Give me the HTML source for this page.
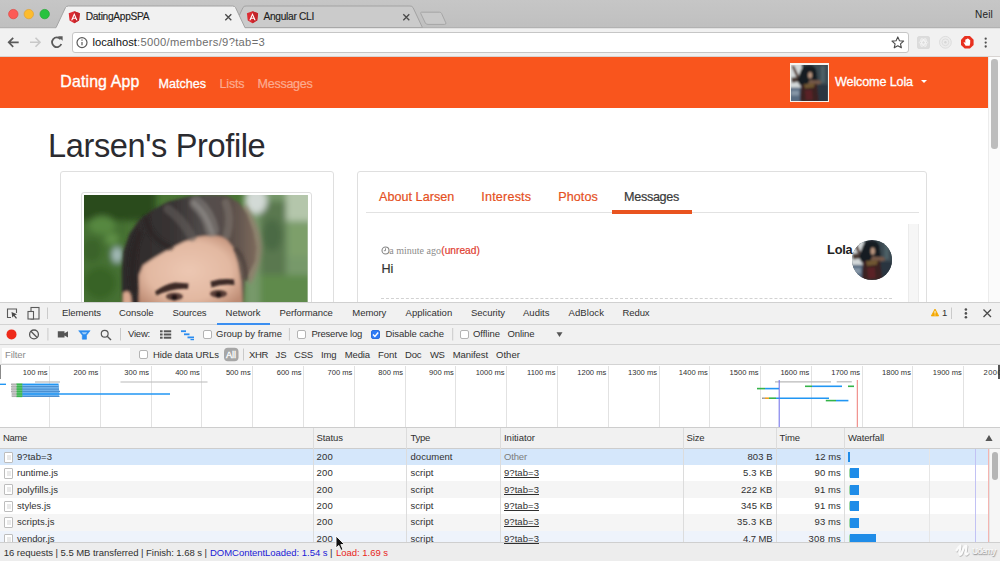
<!DOCTYPE html>
<html>
<head>
<meta charset="utf-8">
<title>DatingAppSPA</title>
<style>
*{box-sizing:border-box;margin:0;padding:0}
html,body{width:1000px;height:561px;overflow:hidden;background:#fff}
body{position:relative;font-family:"Liberation Sans",sans-serif;color:#222}
.abs{position:absolute}
.t{position:absolute;white-space:pre;z-index:5}
#tabstrip{left:0;top:0;width:1000px;height:29px;background:linear-gradient(#c6c6c6,#bfbfbf)}
#toolbar{left:0;top:27px;width:1000px;height:30px;background:#f1f1f1}
#urlbox{left:72px;top:32px;width:836.500px;height:20.500px;background:#fff;border:1px solid #c6c6c6;border-radius:3px}
#navbar{left:0;top:57px;width:988.200px;height:51.300px;background:#f9551d}
#scroll{left:988.200px;top:57px;width:11.800px;height:246px;background:#fbfbfb;border-left:1px solid #ececec}
#thumb{left:991.300px;top:59.400px;width:6.400px;height:89.400px;background:#bdbdbd;border-radius:3.200px}
#dt{left:0;top:302px;width:1000px;height:259px;background:#fff;z-index:2}
.bar{position:absolute;left:0;width:1000px;background:#f1f1f1}
.hl{position:absolute;left:0;width:1000px;height:1px;background:#d3d3d3}
.cb{position:absolute;width:9px;height:9px;border:1px solid #b3b3b3;border-radius:2px;background:#fff}
.row{position:absolute;left:0;width:989px;height:16.4px}
.vl{position:absolute;width:1px;background:#dcdcdc}
.sep{position:absolute;width:1px;background:#cfcfcf}
.fi{position:absolute;left:4px;width:9px;height:11px;border:1px solid #bdbdbd;border-radius:1px;background:#fff}
.wf{position:absolute;height:10px;background:#1f8ce8}
</style>
</head>
<body>
<!-- ===== Browser chrome ===== -->
<div id="tabstrip" class="abs"></div>
<div id="toolbar" class="abs"></div>
<svg class="abs" style="left:0;top:0;z-index:1" width="1000" height="30" viewBox="0 0 1000 30">
  <path d="M233.500 27.700 L243 7.500 Q243.800 6 246 6 L410 6 Q412.200 6 413 7.500 L422.500 27.700 Z" fill="#cbcbcb" stroke="#a3a3a3" stroke-width="1"/>
  <path d="M421.500 12.200 L439.500 12.200 Q441 12.200 441.600 13.500 L445.800 22.800 Q446.300 24.400 444.800 24.400 L428 24.400 Q426 24.400 425.400 23.100 L420.800 13.600 Q420.300 12.200 421.500 12.200 Z" fill="#c9c9c9" stroke="#a6a6a6" stroke-width="1"/>
  <path d="M0 27.700 L56 27.700 L65.500 7.500 Q66.300 6 68.500 6 L232.500 6 Q234.700 6 235.500 7.500 L245 27.700 L1000 27.700 L1000 30 L0 30 Z" fill="#f1f1f1"/>
  <path d="M0 27.700 L56 27.700 L65.500 7.500 Q66.300 6 68.500 6 L232.500 6 Q234.700 6 235.500 7.500 L245 27.700 L1000 27.700" fill="none" stroke="#a3a3a3" stroke-width="1"/>
  <circle cx="13.300" cy="14.100" r="4.700" fill="#fc5b57" stroke="#df4640" stroke-width=".7"/>
  <circle cx="28.800" cy="14.100" r="4.700" fill="#fdbc2e" stroke="#dfa033" stroke-width=".7"/>
  <circle cx="44.700" cy="14.100" r="4.700" fill="#27c23f" stroke="#1fa730" stroke-width=".7"/>
  <g transform="translate(68.700,11.200) scale(.86)">
    <path d="M6.500 0 L13 2.300 L12 10.800 L6.500 14 L1 10.800 L0 2.300 Z" fill="#dd2c33"/>
    <path d="M6.500 0 L13 2.300 L12 10.800 L6.500 14 Z" fill="#c3242b"/>
    <path d="M6.500 2.200 L2.800 10.600 L4.300 10.600 L5.050 8.700 L7.950 8.700 L8.700 10.600 L10.200 10.600 Z M6.500 5 L7.500 7.500 L5.500 7.500 Z" fill="#fff" fill-rule="evenodd"/>
  </g>
  <g transform="translate(246.900,11.200) scale(.86)">
    <path d="M6.500 0 L13 2.300 L12 10.800 L6.500 14 L1 10.800 L0 2.300 Z" fill="#dd2c33"/>
    <path d="M6.500 0 L13 2.300 L12 10.800 L6.500 14 Z" fill="#c3242b"/>
    <path d="M6.500 2.200 L2.800 10.600 L4.300 10.600 L5.050 8.700 L7.950 8.700 L8.700 10.600 L10.200 10.600 Z M6.500 5 L7.500 7.500 L5.500 7.500 Z" fill="#fff" fill-rule="evenodd"/>
  </g>
  <path d="M225.300 14.300 L231.300 20.300 M231.300 14.300 L225.300 20.300" stroke="#4a4a4a" stroke-width="1.300" fill="none"/>
  <path d="M403.300 14.300 L409.300 20.300 M409.300 14.300 L403.300 20.300" stroke="#4a4a4a" stroke-width="1.300" fill="none"/>
</svg>
<div id="urlbox" class="abs"></div>
<div class="abs" style="left:0;top:56px;width:1000px;height:1px;background:#d8d4d2"></div>
<svg class="abs" style="left:0;top:29px;z-index:1" width="1000" height="28" viewBox="0 0 1000 28">
  <path d="M8.700 13.300 L18.700 13.300 M13.200 8.800 L8.700 13.300 L13.200 17.800" stroke="#5a5a5a" stroke-width="1.700" fill="none"/>
  <path d="M30 13.300 L40 13.300 M35.500 8.800 L40 13.300 L35.500 17.800" stroke="#c8c8c8" stroke-width="1.600" fill="none"/>
  <path d="M60.600 10.300 A4.800 4.800 0 1 0 61.300 15" stroke="#5a5a5a" stroke-width="1.800" fill="none"/>
  <path d="M58 7.200 L62.600 7.200 L62.600 11.800 Z" fill="#5a5a5a"/>
  <circle cx="82" cy="13.600" r="5" fill="none" stroke="#5a5a5a" stroke-width="1.200"/>
  <path d="M82 13 L82 16.200 M82 10.600 L82 11.800" stroke="#5a5a5a" stroke-width="1.200"/>
  <path d="M897.800 7.900 L899.500 11.700 L903.600 12.100 L900.500 14.800 L901.400 18.800 L897.800 16.700 L894.200 18.800 L895.100 14.800 L892 12.100 L896.100 11.700 Z" fill="none" stroke="#4a4a4a" stroke-width="1.100" stroke-linejoin="round"/>
  <rect x="917.500" y="7.500" width="12" height="12" rx="1.500" fill="#dcdcdc" stroke="#d3d3d3" stroke-width=".6"/>
  <ellipse cx="923.500" cy="13.500" rx="4.200" ry="1.700" fill="none" stroke="#f4f4f4" stroke-width=".9"/>
  <ellipse cx="923.500" cy="13.500" rx="4.200" ry="1.700" fill="none" stroke="#f4f4f4" stroke-width=".9" transform="rotate(60 923.500 13.500)"/>
  <ellipse cx="923.500" cy="13.500" rx="4.200" ry="1.700" fill="none" stroke="#f4f4f4" stroke-width=".9" transform="rotate(120 923.500 13.500)"/>
  <circle cx="945.400" cy="13.300" r="5.900" fill="#ececec" stroke="#dadada" stroke-width=".9"/>
  <circle cx="945.400" cy="13.300" r="3.400" fill="none" stroke="#d9d9d9" stroke-width=".8"/>
  <circle cx="945.400" cy="13.300" r="1.200" fill="#d6d6d6"/>
  <path d="M964.700 7 L969.900 7 L973.600 10.700 L973.600 15.900 L969.900 19.600 L964.700 19.600 L961 15.900 L961 10.700 Z" fill="#e8301f"/>
  <path d="M965.300 10.600 L965.300 14 L964.400 13.200 Q963.600 12.800 963.700 13.700 L965.600 16.800 L969.600 16.800 L970.200 14.300 L970.200 11 L969.300 11 L969.300 10 L968.300 10 L968.300 9.500 L967.200 9.500 L967.200 10 L966.300 10 L966.300 10.600 Z" fill="#fff"/>
  <circle cx="985.700" cy="9.700" r="1.150" fill="#505050"/><circle cx="985.700" cy="13.600" r="1.150" fill="#505050"/><circle cx="985.700" cy="17.500" r="1.150" fill="#505050"/>
</svg>

<!-- ===== Page ===== -->
<div id="navbar" class="abs"></div>
<svg width="0" height="0" style="position:absolute"><defs>
<filter id="b1" x="-10%" y="-10%" width="120%" height="120%"><feGaussianBlur stdDeviation="0.9"/></filter>
<symbol id="ww" viewBox="0 0 37 37">
<rect width="37" height="37" fill="#35434b"/>
<g filter="url(#b1)">
<rect x="-2" y="-2" width="13" height="27" fill="#d3d8d9"/>
<rect x="23" y="-2" width="17" height="24" fill="#3b4a51"/>
<rect x="30" y="1" width="4" height="17" fill="#4e6066"/>
<rect x="-2" y="23" width="12" height="16" fill="#566a80"/>
<rect x="0" y="26" width="8" height="5" fill="#8595a6"/>
<rect x="23" y="20" width="17" height="19" fill="#2a3641"/>
<path d="M0.500 1 L3 0.500 L8 11.500 L5.500 12.500 Z" fill="#4e3128"/>
<path d="M0 13 L7 12 L8 17 L1 18 Z" fill="#4a3a34"/>
<path d="M9 8 Q11 0 19 0.500 Q26 1 26 9 L27 19 L24 22 L11 22 Q6 19 7 13 Z" fill="#191c21"/>
<ellipse cx="19.200" cy="10.300" rx="2" ry="3.300" fill="#b8947e"/>
<path d="M19 14.500 L22 15.500 L29 15.500 L31 18.500 L24 20.500 L17 19.500 Z" fill="#75584a"/>
<path d="M10 20 L26 19 L28 37 L9 37 Z" fill="#3a2222"/>
<path d="M13 19.500 L24 18.500 L23 23 L14 24 Z" fill="#6f5631"/>
<path d="M14 26 L21 25 L22 35 L15 36 Z" fill="#5a2426"/>
</g>
</symbol></defs></svg><div class="abs" style="left:789.6px;top:63.1px;width:39.4px;height:39.2px;background:#f6f3ee"></div><svg class="abs" style="left:791px;top:64.5px" width="36.8" height="36.4" viewBox="0 0 37 37" preserveAspectRatio="none"><use href="#ww" width="37" height="37"/></svg>
<div class="abs" style="left:920.500px;top:79.500px;width:0;height:0;border-left:3.200px solid transparent;border-right:3.200px solid transparent;border-top:3.400px solid #fff"></div>

<div class="abs" style="left:60px;top:171px;width:274px;height:140px;border:1px solid #dfdfdf;border-radius:3px;background:#fff"></div>
<div class="abs" style="left:80.500px;top:192px;width:231.500px;height:120px;border:1px solid #dedede;border-radius:3px;background:#fff"></div>
<svg class="abs" style="left:84.300px;top:195.300px" width="223.400" height="108" viewBox="0 0 223.400 108">
<defs><filter id="b2" x="-20%" y="-20%" width="140%" height="140%"><feGaussianBlur stdDeviation="3"/></filter>
<filter id="b3" x="-20%" y="-20%" width="140%" height="140%"><feGaussianBlur stdDeviation="1.500"/></filter>
<filter id="b4" x="-20%" y="-20%" width="140%" height="140%"><feGaussianBlur stdDeviation="1.300"/></filter>
<filter id="b5" x="-20%" y="-20%" width="140%" height="140%"><feGaussianBlur stdDeviation="2.200"/></filter>
<linearGradient id="hg" x1="0" y1="0" x2="1" y2="0"><stop offset="0" stop-color="#2c2828"/><stop offset=".4" stop-color="#3a3535"/><stop offset=".62" stop-color="#524d4c"/><stop offset=".82" stop-color="#5b4f4a"/><stop offset="1" stop-color="#7d6a5c"/></linearGradient>
<radialGradient id="sk" cx=".48" cy=".5" r=".62"><stop offset="0" stop-color="#ecc7b2"/><stop offset=".65" stop-color="#e2b8a1"/><stop offset="1" stop-color="#bd8b73"/></radialGradient>
<clipPath id="pc"><rect width="223.400" height="108"/></clipPath></defs>
<g clip-path="url(#pc)">
<rect width="224" height="108" fill="#4a7535"/>
<g filter="url(#b2)">
<rect x="-8" y="-8" width="80" height="34" fill="#2a4c1f"/>
<rect x="-8" y="26" width="52" height="90" fill="#446f30"/>
<ellipse cx="18" cy="30" rx="13" ry="9" fill="#568840"/>
<ellipse cx="8" cy="55" rx="10" ry="12" fill="#3a6429"/>
<ellipse cx="33" cy="60" rx="5" ry="8" fill="#a9c0bf"/>
<ellipse cx="16" cy="88" rx="16" ry="16" fill="#386328"/>
<ellipse cx="28" cy="44" rx="7" ry="6" fill="#5f9046"/>
<rect x="160" y="-8" width="75" height="125" fill="#77996a"/>
<rect x="176" y="6" width="26" height="78" fill="#5a7850"/>
<ellipse cx="188" cy="40" rx="10" ry="16" fill="#4c6a44"/>
<ellipse cx="172" cy="6" rx="11" ry="13" fill="#d3dad6"/>
<rect x="202" y="-8" width="30" height="34" fill="#b4c6ab"/>
<rect x="204" y="28" width="26" height="34" fill="#7d9f6a"/>
<rect x="176" y="80" width="55" height="35" fill="#5f8a4c"/>
</g>
<g filter="url(#b5)">
<path d="M162 10 Q178 34 178 54 Q176 74 166 90 L156 70 Q162 40 158 12 Z" fill="#927d6e" opacity=".8"/>
</g>
<g filter="url(#b3)">
<path d="M38 112 L37.800 76 L39.400 56.500 L45.300 39 L55 25 L69 14.400 L84.500 6.500 L104 1.500 L124 -0.500 L143 0.500 L155 7.500 L163 19.300 L169.500 37 L172.500 52.600 L171 66 L166 76 L161 84 L159 112 Z" fill="url(#hg)"/>
<path d="M55 112 L55 80 L59 70.300 L70.800 62.400 L84.500 54.600 L100 46.700 L114 41.800 L129.600 40 L141.400 42.800 L149.200 52.600 L154 68.300 L157 86 L159 112 Z" fill="url(#sk)"/>
<path d="M38.500 112 L39 98 Q43 94.500 46.500 98 L48 112 Z" fill="#d8a78e"/>
</g>
<g filter="url(#b3)" fill="none" stroke-linecap="round">
<path d="M128 35 Q124 18 112 8" stroke="#8a8582" stroke-width="14" opacity=".5"/>
<path d="M128 37 Q122 18 110 8" stroke="#9a9592" stroke-width="5" opacity=".5"/>
<path d="M108 42 Q98 24 84 14" stroke="#67625f" stroke-width="9" opacity=".5"/>
<path d="M143 40 Q148 22 142 8" stroke="#7d746e" stroke-width="8" opacity=".55"/>
<path d="M86 52 Q66 44 62 24" stroke="#262222" stroke-width="7" opacity=".55"/>
<path d="M50 96 Q44 66 56 38" stroke="#262222" stroke-width="7" opacity=".55"/>
<path d="M152 54 Q162 64 162 84" stroke="#4a3d38" stroke-width="4" opacity=".7"/>
</g>
<g filter="url(#b4)">
<path d="M71 96.500 Q80 89.500 91 87.500 L104.500 88.500 L104 94 Q90 92.500 72.500 100.500 Z" fill="#3d2c28"/>
<path d="M126.500 86.500 Q138 83 150 84.500 L150.500 90 Q138 88.500 127.500 92.500 Z" fill="#3d2c28"/>
<ellipse cx="90.400" cy="101.500" rx="8.500" ry="3.800" fill="#4a322c" opacity=".9"/>
<ellipse cx="134.500" cy="98.800" rx="8.500" ry="3.800" fill="#4a322c" opacity=".9"/>
<ellipse cx="90.400" cy="102.500" rx="3" ry="3" fill="#241816"/>
<ellipse cx="134.500" cy="99.800" rx="3" ry="3" fill="#241816"/>
</g>
</g></svg>

<div class="abs" style="left:357px;top:171px;width:570px;height:140px;border:1px solid #dfdfdf;border-radius:3px;background:#fff"></div>
<div class="abs" style="left:366px;top:212px;width:553px;height:1px;background:#e2e2e2"></div>
<div class="abs" style="left:612px;top:210px;width:79.500px;height:3.600px;background:#e95420"></div>
<div class="abs" style="left:907.500px;top:224px;width:11.500px;height:80px;background:#f6f6f6;border-left:1px solid #ebebeb;border-right:1px solid #ebebeb"></div>
<svg class="abs" style="left:380.700px;top:246.300px" width="9" height="9" viewBox="0 0 9 9"><circle cx="4.500" cy="4.500" r="3.500" fill="none" stroke="#858585" stroke-width="1.100"/><path d="M4.500 2.300 L4.500 4.700 L2.900 4.700" stroke="#858585" stroke-width=".9" fill="none"/></svg>
<svg class="abs" style="left:851.5px;top:239.5px" width="40" height="40" viewBox="0 0 37 37"><defs><clipPath id="cc"><circle cx="18.500" cy="18.500" r="18.500"/></clipPath></defs><g clip-path="url(#cc)"><use href="#ww" width="37" height="37"/></g></svg>
<div class="abs" style="left:381px;top:297.500px;width:510.500px;height:0;border-top:1px dashed #d2d2d2"></div>

<div id="scroll" class="abs"></div>
<div id="thumb" class="abs"></div>

<!-- ===== DevTools ===== -->
<div id="dt" class="abs">
  <div class="hl" style="top:0;background:#d0d0d0"></div>
  <div class="bar" style="top:1px;height:21px"></div>
  <div class="hl" style="top:21.500px"></div>
  <div class="abs" style="left:217px;top:20.600px;width:53px;height:2px;background:#3b8ff1"></div>
  <div class="bar" style="top:23px;height:20px"></div>
  <div class="hl" style="top:42.200px"></div>
  <div class="bar" style="top:43.200px;height:19.800px"></div>
  <div class="hl" style="top:62px"></div>
  <div class="abs" style="left:2px;top:45.500px;width:128px;height:15.500px;background:#fff"></div>
  <!-- tab bar icons -->
  <svg class="abs" style="left:0;top:0" width="1000" height="64" viewBox="0 302 1000 64">
    <path d="M16.500 313 L16.500 309 L7.500 309 L7.500 317.500 L11 317.500" fill="none" stroke="#5a5a5a" stroke-width="1.100"/>
    <path d="M11.500 312 L17 314.300 L14.800 315.200 L17 318 L16 318.800 L13.800 316 L12.300 317.600 Z" fill="#4a4a4a"/>
    <rect x="31" y="307.500" width="8" height="11.500" fill="none" stroke="#5a5a5a" stroke-width="1.100"/>
    <rect x="28" y="311.500" width="5.500" height="7.500" fill="#f1f1f1" stroke="#5a5a5a" stroke-width="1.100"/>
    <path d="M47.500 307.500 L47.500 319" stroke="#cacaca" stroke-width="1"/>
    <path d="M935 309 L938.700 315.900 L931.300 315.900 Z" fill="#f4a800" stroke="#f4a800" stroke-width=".8" stroke-linejoin="round"/>
    <path d="M935 311 L935 313.600 M935 314.600 L935 315.400" stroke="#fff" stroke-width="1"/>
    <path d="M951.500 307.500 L951.500 319" stroke="#cacaca" stroke-width="1"/>
    <circle cx="965.900" cy="309.500" r="1.300" fill="#505050"/><circle cx="965.900" cy="313.400" r="1.300" fill="#505050"/><circle cx="965.900" cy="317.300" r="1.300" fill="#505050"/>
    <path d="M983.500 309.500 L991 317 M991 309.500 L983.500 317" stroke="#4a4a4a" stroke-width="1.300"/>
    <!-- toolbar -->
    <circle cx="11.500" cy="334.400" r="5" fill="#ee2a1a"/>
    <circle cx="34" cy="334.400" r="4.400" fill="none" stroke="#555" stroke-width="1.300"/>
    <path d="M30.900 331.300 L37.100 337.500" stroke="#555" stroke-width="1.300"/>
    <path d="M47.900 328 L47.900 340.500" stroke="#cacaca" stroke-width="1"/>
    <path d="M57.800 331.300 L64.500 331.300 L64.500 333.300 L68 331.300 L68 337.500 L64.500 335.500 L64.500 337.500 L57.800 337.500 Z" fill="#555"/>
    <path d="M78.700 330.700 L90.100 330.700 L86.500 335.200 L86.500 339.200 L82.300 339.200 L82.300 335.200 Z" fill="#2a8cf0" stroke="#2a8cf0" stroke-width=".6" stroke-linejoin="round"/>
    <path d="M81.600 332.200 L87.200 332.200 L85.600 334.200 L83.200 334.200 Z" fill="#9fcdf8"/>
    <circle cx="104.700" cy="333.700" r="3.400" fill="none" stroke="#555" stroke-width="1.200"/>
    <path d="M107.200 336.300 L111 340" stroke="#555" stroke-width="1.400"/>
    <path d="M120.500 328 L120.500 340.500" stroke="#cacaca" stroke-width="1"/>
    <!-- list icon -->
    <g fill="#555"><rect x="160" y="330.300" width="2.600" height="2"/><rect x="163.800" y="330.300" width="7.400" height="2"/><rect x="160" y="333.500" width="2.600" height="2"/><rect x="163.800" y="333.500" width="7.400" height="2"/><rect x="160" y="336.700" width="2.600" height="2"/><rect x="163.800" y="336.700" width="7.400" height="2"/></g>
    <g fill="#2a8cf0"><rect x="181" y="330.300" width="5" height="1.800"/><rect x="184" y="333.400" width="5.500" height="1.800"/><rect x="187.500" y="336.500" width="6.500" height="1.800"/><rect x="190.500" y="339" width="3.500" height="1.200"/></g>
    <path d="M289.400 328 L289.400 340.500 M452.700 328 L452.700 340.500" stroke="#cacaca" stroke-width="1"/>
    <path d="M556.500 332.200 L562.500 332.200 L559.500 337 Z" fill="#555"/>
    <!-- filter row -->
    <rect x="224" y="347.800" width="14.500" height="13.400" rx="4" fill="#a6a6a6"/>
    <path d="M243.500 348.500 L243.500 360.500" stroke="#cacaca" stroke-width="1"/>
  </svg>
  <div class="cb" style="left:202.500px;top:28px"></div>
  <div class="cb" style="left:297px;top:28px"></div>
  <div class="cb" style="left:371px;top:28px;background:#2f7cf6;border-color:#2a6fe0"></div>
  <svg class="abs" style="left:371px;top:28px" width="9" height="9" viewBox="0 0 9 9"><path d="M2 4.600 L3.900 6.500 L7.200 2.500" stroke="#fff" stroke-width="1.400" fill="none"/></svg>
  <div class="cb" style="left:459.500px;top:28px"></div>
  <div class="cb" style="left:139px;top:48px"></div>

  <!-- timeline overview -->
  <div class="abs" id="tl" style="left:0;top:63.500px;width:1000px;height:62px;background:#fff"></div>
<div class="vl" style="left:49.0px;top:63.5px;height:62px;background:#e2e2e2"></div>
<div class="vl" style="left:99.8px;top:63.5px;height:62px;background:#e2e2e2"></div>
<div class="vl" style="left:150.6px;top:63.5px;height:62px;background:#e2e2e2"></div>
<div class="vl" style="left:201.4px;top:63.5px;height:62px;background:#e2e2e2"></div>
<div class="vl" style="left:252.2px;top:63.5px;height:62px;background:#e2e2e2"></div>
<div class="vl" style="left:302.9px;top:63.5px;height:62px;background:#e2e2e2"></div>
<div class="vl" style="left:353.7px;top:63.5px;height:62px;background:#e2e2e2"></div>
<div class="vl" style="left:404.5px;top:63.5px;height:62px;background:#e2e2e2"></div>
<div class="vl" style="left:455.3px;top:63.5px;height:62px;background:#e2e2e2"></div>
<div class="vl" style="left:506.1px;top:63.5px;height:62px;background:#e2e2e2"></div>
<div class="vl" style="left:556.9px;top:63.5px;height:62px;background:#e2e2e2"></div>
<div class="vl" style="left:607.7px;top:63.5px;height:62px;background:#e2e2e2"></div>
<div class="vl" style="left:658.5px;top:63.5px;height:62px;background:#e2e2e2"></div>
<div class="vl" style="left:709.3px;top:63.5px;height:62px;background:#e2e2e2"></div>
<div class="vl" style="left:760.1px;top:63.5px;height:62px;background:#e2e2e2"></div>
<div class="vl" style="left:810.9px;top:63.5px;height:62px;background:#e2e2e2"></div>
<div class="vl" style="left:861.6px;top:63.5px;height:62px;background:#e2e2e2"></div>
<div class="vl" style="left:912.4px;top:63.5px;height:62px;background:#e2e2e2"></div>
<div class="vl" style="left:963.2px;top:63.5px;height:62px;background:#e2e2e2"></div>
<div class="abs" style="left:0;top:63px;width:1px;height:14px;background:#8a8a8a"></div>
<div class="abs" style="left:997.5px;top:63px;width:2.5px;height:14px;background:#555;z-index:6"></div>
<svg class="abs" style="left:0;top:62px" width="1000" height="64" viewBox="0 364 1000 64"><path d="M35.0 382.0 L60.0 382.0" stroke="#b9b9b9" stroke-width="1.2"/><path d="M120.5 382.0 L207.5 382.0" stroke="#b9b9b9" stroke-width="1.2"/><path d="M0.0 384.3 L6.0 384.3" stroke="#2196f3" stroke-width="1.4"/><rect x="22" y="383.6" width="37" height="13.4" fill="#7dbcf4"/><path d="M11.0 384.3 L17.0 384.3" stroke="#a9a9a9" stroke-width="1.3"/><path d="M16.5 384.3 L22.3 384.3" stroke="#35b34a" stroke-width="1.5"/><path d="M22.3 384.3 L58.0 384.3" stroke="#2196f3" stroke-width="1.3"/><path d="M11.0 386.7 L17.0 386.7" stroke="#a9a9a9" stroke-width="1.3"/><path d="M16.5 386.7 L22.3 386.7" stroke="#35b34a" stroke-width="1.5"/><path d="M22.3 386.7 L58.5 386.7" stroke="#4b8fd0" stroke-width="1.3"/><path d="M11.0 389.1 L17.0 389.1" stroke="#a9a9a9" stroke-width="1.3"/><path d="M16.5 389.1 L22.3 389.1" stroke="#35b34a" stroke-width="1.5"/><path d="M22.3 389.1 L59.0 389.1" stroke="#4b8fd0" stroke-width="1.3"/><path d="M11.0 391.5 L17.0 391.5" stroke="#a9a9a9" stroke-width="1.3"/><path d="M16.5 391.5 L22.3 391.5" stroke="#35b34a" stroke-width="1.5"/><path d="M22.3 391.5 L60.0 391.5" stroke="#4b8fd0" stroke-width="1.3"/><path d="M12.0 394.0 L17.0 394.0" stroke="#a9a9a9" stroke-width="1.3"/><path d="M16.5 394.0 L22.3 394.0" stroke="#35b34a" stroke-width="1.5"/><path d="M22.3 394.0 L170.0 394.0" stroke="#2196f3" stroke-width="1.6"/><path d="M12.0 396.4 L17.0 396.4" stroke="#a9a9a9" stroke-width="1.3"/><path d="M16.5 396.4 L22.3 396.4" stroke="#35b34a" stroke-width="1.5"/><path d="M22.3 396.4 L59.5 396.4" stroke="#4b8fd0" stroke-width="1.3"/><rect x="16.5" y="383.6" width="5.8" height="13.4" fill="#3cb650" opacity=".75"/><rect x="11.5" y="383.6" width="5" height="13.4" fill="#b5b5b5" opacity=".7"/><path d="M775.0 381.8 L831.0 381.8" stroke="#b9b9b9" stroke-width="1.2"/><path d="M836.7 381.8 L851.8 381.8" stroke="#b9b9b9" stroke-width="1.2"/><path d="M757.0 388.6 L765.0 388.6" stroke="#35b34a" stroke-width="1.6"/><path d="M765.0 388.6 L779.0 388.6" stroke="#2196f3" stroke-width="1.6"/><path d="M805.0 386.3 L812.0 386.3" stroke="#35b34a" stroke-width="1.6"/><path d="M812.0 386.3 L842.0 386.3" stroke="#2196f3" stroke-width="1.6"/><path d="M848.0 386.3 L854.0 386.3" stroke="#35b34a" stroke-width="1.6"/><path d="M762.0 398.2 L765.0 398.2" stroke="#999" stroke-width="1.4"/><path d="M765.0 398.2 L769.0 398.2" stroke="#f0a020" stroke-width="1.6"/><path d="M769.0 398.2 L776.0 398.2" stroke="#35b34a" stroke-width="1.6"/><path d="M776.0 398.2 L829.0 398.2" stroke="#2196f3" stroke-width="1.6"/><path d="M825.8 400.6 L836.0 400.6" stroke="#35b34a" stroke-width="1.6"/><path d="M836.0 400.6 L848.4 400.6" stroke="#2196f3" stroke-width="1.6"/><path d="M779.2 380 L779.2 428" stroke="#6a6ae8" stroke-width="1"/><path d="M857.3 380 L857.3 428" stroke="#ee7b76" stroke-width="1"/></svg>
  <!-- table -->
  <div class="hl" style="top:124.800px;background:#cdcdcd"></div>
  <div class="bar" style="top:125.800px;height:20.200px;background:#f1f1f1"></div>
  <div class="hl" style="top:146px;background:#cdcdcd"></div>
  <div class="row" style="top:146.600px;background:#d5e7fb"></div>
  <div class="row" style="top:163px;background:#fff"></div>
  <div class="row" style="top:179.400px;background:#f5f5f5"></div>
  <div class="row" style="top:195.800px;background:#fff"></div>
  <div class="row" style="top:212.200px;background:#f5f5f5"></div>
  <div class="row" style="top:228.600px;background:#eef3fb"></div>
  <div class="abs" style="left:989px;top:146.600px;width:11px;height:94px;background:#f6f6f6;border-left:1px solid #e4e4e4"></div>
  <div class="abs" style="left:991.500px;top:149.500px;width:6px;height:28px;border-radius:3px;background:#b5b5b5"></div>
<div class="fi" style="top:149.5px"><div style="position:absolute;left:1.5px;top:2px;width:4px;height:5px;background:#e9e9e9"></div></div>
<div class="fi" style="top:165.9px"><div style="position:absolute;left:1.5px;top:2px;width:4px;height:5px;background:#e9e9e9"></div></div>
<div class="fi" style="top:182.3px"><div style="position:absolute;left:1.5px;top:2px;width:4px;height:5px;background:#e9e9e9"></div></div>
<div class="fi" style="top:198.7px"><div style="position:absolute;left:1.5px;top:2px;width:4px;height:5px;background:#e9e9e9"></div></div>
<div class="fi" style="top:215.1px"><div style="position:absolute;left:1.5px;top:2px;width:4px;height:5px;background:#e9e9e9"></div></div>
<div class="fi" style="top:231.5px"><div style="position:absolute;left:1.5px;top:2px;width:4px;height:5px;background:#e9e9e9"></div></div>
<div class="wf" style="left:847.6px;top:149.9px;width:2.4px"></div>
<div class="wf" style="left:849.2px;top:166.3px;width:2px;background:#9fd8a4;border-radius:2px 0 0 2px"></div>
<div class="wf" style="left:850.4px;top:166.3px;width:8.2px"></div>
<div class="wf" style="left:849.2px;top:182.7px;width:2px;background:#9fd8a4;border-radius:2px 0 0 2px"></div>
<div class="wf" style="left:850.4px;top:182.7px;width:8.2px"></div>
<div class="wf" style="left:849.2px;top:199.1px;width:2px;background:#9fd8a4;border-radius:2px 0 0 2px"></div>
<div class="wf" style="left:850.4px;top:199.1px;width:8.2px"></div>
<div class="wf" style="left:849.2px;top:215.5px;width:2px;background:#9fd8a4;border-radius:2px 0 0 2px"></div>
<div class="wf" style="left:850.4px;top:215.5px;width:8.2px"></div>
<div class="wf" style="left:849.2px;top:231.9px;width:2px;background:#9fd8a4;border-radius:2px 0 0 2px"></div>
<div class="wf" style="left:850.4px;top:231.9px;width:26.0px"></div>
  <div class="vl" style="left:313px;top:125.500px;height:115px"></div>
  <div class="vl" style="left:406px;top:125.500px;height:115px"></div>
  <div class="vl" style="left:500px;top:125.500px;height:115px"></div>
  <div class="vl" style="left:683px;top:125.500px;height:115px"></div>
  <div class="vl" style="left:776px;top:125.500px;height:115px"></div>
  <div class="vl" style="left:844px;top:125.500px;height:115px"></div>
  <div class="vl" style="left:929px;top:146.600px;height:94px;background:#e6e6e6"></div>
  <div class="vl" style="left:974.500px;top:146.600px;height:94px;background:#c2c2f4"></div>
  <div class="vl" style="left:987.500px;top:146.600px;height:94px;background:#f4b4b0"></div>
  <svg class="abs" style="left:984px;top:132px" width="10" height="8" viewBox="0 0 10 8"><path d="M5 1 L8.600 7 L1.400 7 Z" fill="#555"/></svg>
  <!-- status bar -->
  <div class="bar" style="top:240px;height:19px;background:#ededed;z-index:3"></div>
  <div class="hl" style="top:239.800px;background:#cfcfcf;z-index:3"></div>
  <svg class="abs" style="left:954px;top:241px;z-index:4" width="18" height="16" viewBox="0 0 18 16"><path d="M2.500 7.500 Q4.500 3.500 6.500 2.500 L5.300 10.500 Q5.300 13 7.300 11 L10 4.500 Q11 2.500 12.500 3 L11.500 10.500 Q11.500 12.800 13.800 10.500" stroke="#bdbdbd" stroke-width="2.600" fill="none" stroke-linecap="round" stroke-linejoin="round" transform="translate(.6,.7)"/><path d="M2.500 7.500 Q4.500 3.500 6.500 2.500 L5.300 10.500 Q5.300 13 7.300 11 L10 4.500 Q11 2.500 12.500 3 L11.500 10.500 Q11.500 12.800 13.800 10.500" stroke="#fbfbfb" stroke-width="2.200" fill="none" stroke-linecap="round" stroke-linejoin="round"/></svg>
</div>
<!-- mouse cursor -->
<svg class="abs" style="left:335px;top:535px;z-index:9" width="12" height="17" viewBox="0 0 12 17"><path d="M1 1 L1 13 L3.800 10.400 L6 15.400 L8 14.500 L5.800 9.600 L9.600 9.600 Z" fill="#111" stroke="#fff" stroke-width=".9" stroke-linejoin="round"/></svg>
<div class="t" style="top:10.27px;font-size:10.2px;line-height:13px;color:#1f1f1f;left:85.70px;letter-spacing:-0.300px;-webkit-text-stroke:.15px #1f1f1f">DatingAppSPA</div>
<div class="t" style="top:10.27px;font-size:10.2px;line-height:13px;color:#1f1f1f;left:263.50px;letter-spacing:-0.301px;-webkit-text-stroke:.15px #1f1f1f">Angular CLI</div>
<div class="t" style="top:9.04px;font-size:10px;line-height:12px;color:#222;left:975.00px;letter-spacing:0.191px;">Neil</div>
<div class="t" style="top:35.22px;font-size:11.2px;line-height:14px;color:#111;left:92.40px;letter-spacing:0.049px;">localhost</div>
<div class="t" style="top:35.22px;font-size:11.2px;line-height:14px;color:#6e6e6e;left:137.00px;letter-spacing:0.305px;">:5000/members/9?tab=3</div>
<div class="t" style="top:72.49px;font-size:15.9px;line-height:20px;color:#fff;left:60.30px;letter-spacing:0.145px;-webkit-text-stroke:.35px #fff">Dating App</div>
<div class="t" style="top:75.73px;font-size:12.6px;line-height:16px;color:#fff;left:158.50px;letter-spacing:-0.016px;-webkit-text-stroke:.3px #fff">Matches</div>
<div class="t" style="top:75.73px;font-size:12.6px;line-height:16px;color:#fcab90;left:219.50px;letter-spacing:-0.181px;-webkit-text-stroke:.2px #fcab90">Lists</div>
<div class="t" style="top:75.73px;font-size:12.6px;line-height:16px;color:#fcab90;left:257.50px;letter-spacing:-0.301px;-webkit-text-stroke:.2px #fcab90">Messages</div>
<div class="t" style="top:74.23px;font-size:12.6px;line-height:16px;color:#fff;left:835.00px;letter-spacing:-0.132px;-webkit-text-stroke:.3px #fff">Welcome Lola</div>
<div class="t" style="top:125.00px;font-size:32.6px;line-height:41px;color:#2b2b30;left:48.00px;letter-spacing:-0.388px;">Larsen's Profile</div>
<div class="t" style="top:188.93px;font-size:12.6px;line-height:16px;color:#e5501e;left:379.00px;letter-spacing:0.032px;-webkit-text-stroke:.2px #e5501e">About Larsen</div>
<div class="t" style="top:188.93px;font-size:12.6px;line-height:16px;color:#e5501e;left:481.30px;letter-spacing:0.189px;-webkit-text-stroke:.2px #e5501e">Interests</div>
<div class="t" style="top:188.93px;font-size:12.6px;line-height:16px;color:#e5501e;left:558.30px;letter-spacing:0.047px;-webkit-text-stroke:.2px #e5501e">Photos</div>
<div class="t" style="top:188.53px;font-size:12.6px;line-height:16px;color:#3a3a3a;left:624.00px;letter-spacing:-0.301px;-webkit-text-stroke:.2px #3a3a3a">Messages</div>
<div class="t" style="top:244.93px;font-size:10px;line-height:12px;color:#8c8c8c;left:389.30px;font-family:'Liberation Serif',serif;">a minute ago</div>
<div class="t" style="top:244.27px;font-size:10.2px;line-height:13px;color:#df3e30;left:441.30px;-webkit-text-stroke:.2px #df3e30">(unread)</div>
<div class="t" style="top:260.83px;font-size:12.6px;line-height:16px;color:#333;left:381.50px;letter-spacing:-0.203px;-webkit-text-stroke:.2px #333">Hi</div>
<div class="t" style="top:241.76px;font-size:12.8px;line-height:16px;color:#222;left:827.10px;letter-spacing:-0.278px;font-weight:bold;">Lola</div>
<div class="t" style="top:307.01px;font-size:9.5px;line-height:12px;color:#303030;left:62.00px;letter-spacing:-0.076px;">Elements</div>
<div class="t" style="top:307.01px;font-size:9.5px;line-height:12px;color:#303030;left:119.00px;letter-spacing:-0.051px;">Console</div>
<div class="t" style="top:307.01px;font-size:9.5px;line-height:12px;color:#303030;left:172.50px;letter-spacing:-0.123px;">Sources</div>
<div class="t" style="top:307.01px;font-size:9.5px;line-height:12px;color:#303030;left:225.50px;letter-spacing:0.022px;">Network</div>
<div class="t" style="top:307.01px;font-size:9.5px;line-height:12px;color:#303030;left:279.50px;letter-spacing:-0.099px;">Performance</div>
<div class="t" style="top:307.01px;font-size:9.5px;line-height:12px;color:#303030;left:352.30px;letter-spacing:-0.052px;">Memory</div>
<div class="t" style="top:307.01px;font-size:9.5px;line-height:12px;color:#303030;left:405.60px;letter-spacing:0.011px;">Application</div>
<div class="t" style="top:307.01px;font-size:9.5px;line-height:12px;color:#303030;left:470.90px;letter-spacing:-0.029px;">Security</div>
<div class="t" style="top:307.01px;font-size:9.5px;line-height:12px;color:#303030;left:523.00px;letter-spacing:0.016px;">Audits</div>
<div class="t" style="top:307.01px;font-size:9.5px;line-height:12px;color:#303030;left:568.50px;letter-spacing:0.092px;">AdBlock</div>
<div class="t" style="top:307.01px;font-size:9.5px;line-height:12px;color:#303030;left:622.50px;letter-spacing:-0.094px;">Redux</div>
<div class="t" style="top:307.01px;font-size:9.5px;line-height:12px;color:#303030;left:942.00px;letter-spacing:-1.200px;">1</div>
<div class="t" style="top:328.21px;font-size:9.5px;line-height:12px;color:#303030;left:128.00px;letter-spacing:-0.212px;">View:</div>
<div class="t" style="top:328.21px;font-size:9.5px;line-height:12px;color:#303030;left:216.00px;">Group by frame</div>
<div class="t" style="top:328.21px;font-size:9.5px;line-height:12px;color:#303030;left:311.50px;letter-spacing:-0.237px;">Preserve log</div>
<div class="t" style="top:328.21px;font-size:9.5px;line-height:12px;color:#303030;left:385.60px;letter-spacing:-0.098px;">Disable cache</div>
<div class="t" style="top:328.21px;font-size:9.5px;line-height:12px;color:#303030;left:473.00px;letter-spacing:-0.042px;">Offline</div>
<div class="t" style="top:328.21px;font-size:9.5px;line-height:12px;color:#303030;left:507.50px;letter-spacing:-0.078px;">Online</div>
<div class="t" style="top:348.81px;font-size:9.5px;line-height:12px;color:#8a8a8a;left:5.00px;letter-spacing:-0.087px;">Filter</div>
<div class="t" style="top:348.81px;font-size:9.5px;line-height:12px;color:#303030;left:153.00px;letter-spacing:-0.076px;">Hide data URLs</div>
<div class="t" style="top:348.91px;font-size:9.2px;line-height:12px;color:#fff;left:226.00px;letter-spacing:-0.073px;-webkit-text-stroke:.3px #fff">All</div>
<div class="t" style="top:348.81px;font-size:9.5px;line-height:12px;color:#303030;left:249.00px;letter-spacing:-0.354px;">XHR</div>
<div class="t" style="top:348.81px;font-size:9.5px;line-height:12px;color:#303030;left:275.60px;letter-spacing:-0.097px;">JS</div>
<div class="t" style="top:348.81px;font-size:9.5px;line-height:12px;color:#303030;left:294.00px;letter-spacing:-0.182px;">CSS</div>
<div class="t" style="top:348.81px;font-size:9.5px;line-height:12px;color:#303030;left:321.00px;letter-spacing:-0.115px;">Img</div>
<div class="t" style="top:348.81px;font-size:9.5px;line-height:12px;color:#303030;left:344.80px;letter-spacing:-0.135px;">Media</div>
<div class="t" style="top:348.81px;font-size:9.5px;line-height:12px;color:#303030;left:378.00px;">Font</div>
<div class="t" style="top:348.81px;font-size:9.5px;line-height:12px;color:#303030;left:405.00px;letter-spacing:-0.135px;">Doc</div>
<div class="t" style="top:348.81px;font-size:9.5px;line-height:12px;color:#303030;left:430.00px;letter-spacing:-0.356px;">WS</div>
<div class="t" style="top:348.81px;font-size:9.5px;line-height:12px;color:#303030;left:452.70px;letter-spacing:-0.076px;">Manifest</div>
<div class="t" style="top:348.81px;font-size:9.5px;line-height:12px;color:#303030;left:496.00px;letter-spacing:0.047px;">Other</div>
<div class="t" style="top:368.28px;font-size:7.55px;line-height:9px;color:#2f2f2f;right:952.50px;">100 ms</div>
<div class="t" style="top:368.28px;font-size:7.55px;line-height:9px;color:#2f2f2f;right:901.71px;">200 ms</div>
<div class="t" style="top:368.28px;font-size:7.55px;line-height:9px;color:#2f2f2f;right:850.92px;">300 ms</div>
<div class="t" style="top:368.28px;font-size:7.55px;line-height:9px;color:#2f2f2f;right:800.13px;">400 ms</div>
<div class="t" style="top:368.28px;font-size:7.55px;line-height:9px;color:#2f2f2f;right:749.34px;">500 ms</div>
<div class="t" style="top:368.28px;font-size:7.55px;line-height:9px;color:#2f2f2f;right:698.55px;">600 ms</div>
<div class="t" style="top:368.28px;font-size:7.55px;line-height:9px;color:#2f2f2f;right:647.76px;">700 ms</div>
<div class="t" style="top:368.28px;font-size:7.55px;line-height:9px;color:#2f2f2f;right:596.97px;">800 ms</div>
<div class="t" style="top:368.28px;font-size:7.55px;line-height:9px;color:#2f2f2f;right:546.18px;">900 ms</div>
<div class="t" style="top:368.28px;font-size:7.55px;line-height:9px;color:#2f2f2f;right:495.39px;">1000 ms</div>
<div class="t" style="top:368.28px;font-size:7.55px;line-height:9px;color:#2f2f2f;right:444.60px;">1100 ms</div>
<div class="t" style="top:368.28px;font-size:7.55px;line-height:9px;color:#2f2f2f;right:393.81px;">1200 ms</div>
<div class="t" style="top:368.28px;font-size:7.55px;line-height:9px;color:#2f2f2f;right:343.02px;">1300 ms</div>
<div class="t" style="top:368.28px;font-size:7.55px;line-height:9px;color:#2f2f2f;right:292.23px;">1400 ms</div>
<div class="t" style="top:368.28px;font-size:7.55px;line-height:9px;color:#2f2f2f;right:241.44px;">1500 ms</div>
<div class="t" style="top:368.28px;font-size:7.55px;line-height:9px;color:#2f2f2f;right:190.65px;">1600 ms</div>
<div class="t" style="top:368.28px;font-size:7.55px;line-height:9px;color:#2f2f2f;right:139.86px;">1700 ms</div>
<div class="t" style="top:368.28px;font-size:7.55px;line-height:9px;color:#2f2f2f;right:89.07px;">1800 ms</div>
<div class="t" style="top:368.28px;font-size:7.55px;line-height:9px;color:#2f2f2f;right:38.28px;">1900 ms</div>
<div class="t" style="top:368.28px;font-size:7.55px;line-height:9px;color:#2f2f2f;left:983.50px;letter-spacing:0.476px;">2000</div>
<div class="t" style="top:432.01px;font-size:9.5px;line-height:12px;color:#303030;left:3.00px;letter-spacing:-0.336px;">Name</div>
<div class="t" style="top:432.01px;font-size:9.5px;line-height:12px;color:#303030;left:316.50px;letter-spacing:-0.073px;">Status</div>
<div class="t" style="top:432.01px;font-size:9.5px;line-height:12px;color:#303030;left:410.50px;letter-spacing:-0.277px;">Type</div>
<div class="t" style="top:432.01px;font-size:9.5px;line-height:12px;color:#303030;left:504.00px;letter-spacing:-0.017px;">Initiator</div>
<div class="t" style="top:432.01px;font-size:9.5px;line-height:12px;color:#303030;left:686.50px;letter-spacing:-0.121px;">Size</div>
<div class="t" style="top:432.01px;font-size:9.5px;line-height:12px;color:#303030;left:779.50px;letter-spacing:-0.066px;">Time</div>
<div class="t" style="top:432.01px;font-size:9.5px;line-height:12px;color:#303030;left:848.00px;letter-spacing:-0.127px;">Waterfall</div>
<div class="t" style="top:450.81px;font-size:9.5px;line-height:12px;color:#303030;left:17.00px;letter-spacing:0.056px;">9?tab=3</div>
<div class="t" style="top:450.81px;font-size:9.5px;line-height:12px;color:#303030;left:316.50px;letter-spacing:0.214px;">200</div>
<div class="t" style="top:450.81px;font-size:9.5px;line-height:12px;color:#303030;left:410.50px;letter-spacing:0.033px;">document</div>
<div class="t" style="top:450.81px;font-size:9.5px;line-height:12px;color:#7c7c7c;left:504.00px;letter-spacing:-0.153px;">Other</div>
<div class="t" style="top:450.81px;font-size:9.5px;line-height:12px;color:#303030;left:747.50px;letter-spacing:0.034px;">803 B</div>
<div class="t" style="top:450.81px;font-size:9.5px;line-height:12px;color:#303030;left:815.00px;letter-spacing:0.025px;">12 ms</div>
<div class="t" style="top:467.21px;font-size:9.5px;line-height:12px;color:#303030;left:17.00px;letter-spacing:-0.019px;">runtime.js</div>
<div class="t" style="top:467.21px;font-size:9.5px;line-height:12px;color:#303030;left:316.50px;letter-spacing:0.214px;">200</div>
<div class="t" style="top:467.21px;font-size:9.5px;line-height:12px;color:#303030;left:410.50px;letter-spacing:0.049px;">script</div>
<div class="t" style="top:467.21px;font-size:9.5px;line-height:12px;color:#303030;left:504.00px;letter-spacing:0.056px;text-decoration:underline">9?tab=3</div>
<div class="t" style="top:467.21px;font-size:9.5px;line-height:12px;color:#303030;left:743.00px;letter-spacing:0.161px;">5.3 KB</div>
<div class="t" style="top:467.21px;font-size:9.5px;line-height:12px;color:#303030;left:814.50px;letter-spacing:0.125px;">90 ms</div>
<div class="t" style="top:483.61px;font-size:9.5px;line-height:12px;color:#303030;left:17.00px;letter-spacing:0.029px;">polyfills.js</div>
<div class="t" style="top:483.61px;font-size:9.5px;line-height:12px;color:#303030;left:316.50px;letter-spacing:0.214px;">200</div>
<div class="t" style="top:483.61px;font-size:9.5px;line-height:12px;color:#303030;left:410.50px;letter-spacing:0.049px;">script</div>
<div class="t" style="top:483.61px;font-size:9.5px;line-height:12px;color:#303030;left:504.00px;letter-spacing:0.056px;text-decoration:underline">9?tab=3</div>
<div class="t" style="top:483.61px;font-size:9.5px;line-height:12px;color:#303030;left:741.00px;letter-spacing:0.055px;">222 KB</div>
<div class="t" style="top:483.61px;font-size:9.5px;line-height:12px;color:#303030;left:814.50px;letter-spacing:0.125px;">91 ms</div>
<div class="t" style="top:500.01px;font-size:9.5px;line-height:12px;color:#303030;left:17.00px;">styles.js</div>
<div class="t" style="top:500.01px;font-size:9.5px;line-height:12px;color:#303030;left:316.50px;letter-spacing:0.214px;">200</div>
<div class="t" style="top:500.01px;font-size:9.5px;line-height:12px;color:#303030;left:410.50px;letter-spacing:0.049px;">script</div>
<div class="t" style="top:500.01px;font-size:9.5px;line-height:12px;color:#303030;left:504.00px;letter-spacing:0.056px;text-decoration:underline">9?tab=3</div>
<div class="t" style="top:500.01px;font-size:9.5px;line-height:12px;color:#303030;left:741.00px;letter-spacing:0.055px;">345 KB</div>
<div class="t" style="top:500.01px;font-size:9.5px;line-height:12px;color:#303030;left:814.50px;letter-spacing:0.125px;">91 ms</div>
<div class="t" style="top:516.41px;font-size:9.5px;line-height:12px;color:#303030;left:17.00px;letter-spacing:0.055px;">scripts.js</div>
<div class="t" style="top:516.41px;font-size:9.5px;line-height:12px;color:#303030;left:316.50px;letter-spacing:0.214px;">200</div>
<div class="t" style="top:516.41px;font-size:9.5px;line-height:12px;color:#303030;left:410.50px;letter-spacing:0.049px;">script</div>
<div class="t" style="top:516.41px;font-size:9.5px;line-height:12px;color:#303030;left:504.00px;letter-spacing:0.056px;text-decoration:underline">9?tab=3</div>
<div class="t" style="top:516.41px;font-size:9.5px;line-height:12px;color:#303030;left:737.00px;letter-spacing:0.241px;">35.3 KB</div>
<div class="t" style="top:516.41px;font-size:9.5px;line-height:12px;color:#303030;left:814.50px;letter-spacing:0.125px;">93 ms</div>
<div class="t" style="top:532.81px;font-size:9.5px;line-height:12px;color:#303030;left:17.00px;letter-spacing:-0.059px;">vendor.js</div>
<div class="t" style="top:532.81px;font-size:9.5px;line-height:12px;color:#303030;left:316.50px;letter-spacing:0.214px;">200</div>
<div class="t" style="top:532.81px;font-size:9.5px;line-height:12px;color:#303030;left:410.50px;letter-spacing:0.049px;">script</div>
<div class="t" style="top:532.81px;font-size:9.5px;line-height:12px;color:#303030;left:504.00px;letter-spacing:0.056px;text-decoration:underline">9?tab=3</div>
<div class="t" style="top:532.81px;font-size:9.5px;line-height:12px;color:#303030;left:743.00px;letter-spacing:-0.102px;">4.7 MB</div>
<div class="t" style="top:532.81px;font-size:9.5px;line-height:12px;color:#303030;left:808.50px;letter-spacing:0.224px;">308 ms</div>
<div class="t" style="top:547.11px;font-size:9.5px;line-height:12px;color:#303030;left:3.80px;letter-spacing:-0.044px;">16 requests | 5.5 MB transferred | Finish: 1.68 s |</div>
<div class="t" style="top:547.11px;font-size:9.5px;line-height:12px;color:#1a1ad6;left:210.00px;letter-spacing:-0.033px;">DOMContentLoaded: 1.54 s</div>
<div class="t" style="top:547.11px;font-size:9.5px;line-height:12px;color:#303030;left:330.00px;letter-spacing:-0.469px;">|</div>
<div class="t" style="top:547.11px;font-size:9.5px;line-height:12px;color:#e8251c;left:336.00px;letter-spacing:-0.025px;">Load: 1.69 s</div>
<div class="t" style="top:545.82px;font-size:8.6px;line-height:11px;color:rgba(255,255,255,.85);left:972.00px;letter-spacing:-1.031px;font-weight:bold;text-shadow:.5px .7px 1.2px rgba(0,0,0,.4)">Udemy</div>
</body>
</html>
